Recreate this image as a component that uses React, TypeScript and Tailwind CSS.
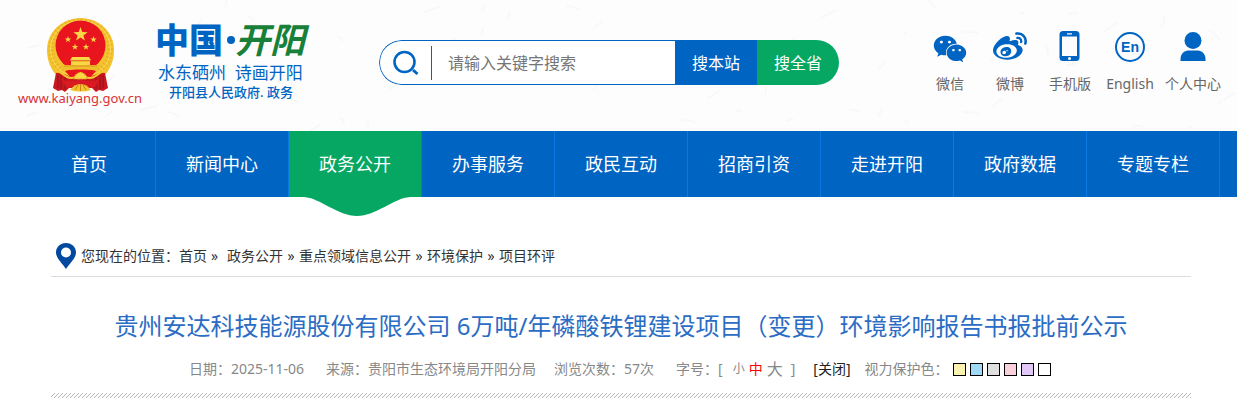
import React from "react";
import { FaWeibo, FaWeixin } from "react-icons/fa";

const navItems = [
  "首页",
  "新闻中心",
  "政务公开",
  "办事服务",
  "政民互动",
  "招商引资",
  "走进开阳",
  "政府数据",
  "专题专栏",
];

const crumbs = ["政务公开", "重点领域信息公开", "环境保护", "项目环评"];

const eyeColors = [
  { name: "黄色", cls: "bg-[#faf3b0]" },
  { name: "蓝色", cls: "bg-[#9fd9f6]" },
  { name: "灰色", cls: "bg-[#dfdfdf]" },
  { name: "粉色", cls: "bg-[#fad0db]" },
  { name: "紫色", cls: "bg-[#e2c8f8]" },
  { name: "白色", cls: "bg-white" },
];

// faint paper fibres behind the header
const fibres = Array.from({ length: 110 }, (_, i) => {
  const x = (i * 397) % 1900;
  const y = (i * 83 + ((i * i) % 37)) % 131;
  const dx = ((i * 29) % 27) - 9;
  const dy = ((i * 17) % 19) - 12;
  return `M${x} ${y}q${dx / 2 + 2} ${dy / 2 - 1} ${dx} ${dy}`;
}).join("");

const star = (cx: number, cy: number, r: number) =>
  Array.from({ length: 10 }, (_, i) => {
    const a = (Math.PI / 5) * i - Math.PI / 2;
    const d = i % 2 ? r * 0.4 : r;
    return `${(cx + d * Math.cos(a)).toFixed(2)},${(cy + d * Math.sin(a)).toFixed(2)}`;
  }).join(" ");

const Emblem = () => (
  <svg className="h-[74px] w-[67px]" viewBox="0 0 67 74" aria-hidden="true">
    <path
      d="M33.5 0C15 0 0 14 0 32c0 11 4 20 11 27l9 5h27l9-5c7-7 11-16 11-27C67 14 52 0 33.5 0Z"
      fill="#f3c22d"
    />
    <ellipse cx="33.5" cy="31" rx="29.5" ry="28" fill="none" stroke="#e3a922" strokeWidth="5" strokeDasharray="1 3" />
    <ellipse cx="33.5" cy="31" rx="30" ry="28.5" fill="none" stroke="#fbdc55" strokeWidth="1" />
    <circle cx="33.5" cy="27.5" r="25" fill="#e8141e" />
    <g fill="#fbd745">
      <polygon points={star(33.5, 16.5, 7.5)} />
      <polygon points={star(21, 21.5, 3.4)} />
      <polygon points={star(46.5, 21.5, 3.4)} />
      <polygon points={star(28, 29, 3.4)} />
      <polygon points={star(39, 29, 3.4)} />
      <path d="M25 39h17l2 3.500H23ZM24 43h19v4H24Z" />
      <path d="M14 47h39l-3 6H17Z" fill="#f0bd2c" />
    </g>
    <path d="M24 43h19M17 48h33" stroke="#c9871a" strokeWidth=".7" />
    <path d="M9 55c6-1 9 2 15 4l9.500 3 9.500-3c6-2 9-5 15-4l3 15-5 3-4-1-3 2-4-4H22l-4 4-3-2-4 1-5-3Z" fill="#c91720" />
    <path d="M11 57v13M14 57v14M18 58v13M49 58v13M53 57v14M56 57v13" stroke="#8f1018" strokeWidth=".9" />
    <path d="M18 53c5-2 26-2 31 0l-7 8H25Z" fill="#e8141e" />
    <path d="M9 53c6 0 8 7 15 7s9-5 9.500-5S36 60 43 60s9-7 15-7" fill="none" stroke="#f5c831" strokeWidth="2" />
    <path d="M27 61a6.500 6.500 0 0 1 13 0Z" fill="#fbd745" stroke="#d99a1c" strokeWidth="1" strokeDasharray="2 1.500" />
    <path d="M14 61c8 3 13 3 19.500 0 6.500 3 11.500 3 19.500 0l-5 8c-5 1-10 0-14.500-3-4.500 3-9.500 4-14.500 3Z" fill="#d91a22" />
    <path d="M23 72c3-4 6-6 10.500-6S41 68 44 72c-7 2-14 2-21 0Z" fill="#f3c22d" />
    <path d="m28 72 3-5m2.500 6v-7m5.500 6-3-5" stroke="#c9871a" strokeWidth="1" />
  </svg>
);

const PhoneIcon = () => (
  <svg className="h-[31px] w-[22px]" viewBox="0 0 22 31" aria-hidden="true">
    <path
      fillRule="evenodd"
      fill="#0064c3"
      d="M4 0h13a3.500 3.500 0 0 1 3.500 3.500v23A3.500 3.500 0 0 1 17 30H4a3.500 3.500 0 0 1-3.500-3.500v-23A3.500 3.500 0 0 1 4 0ZM3 5.500V25h15V5.500ZM8 2.200v1.300h5V2.200ZM10.500 26a1.500 1.500 0 1 0 0 3 1.500 1.500 0 0 0 0-3Z"
    />
  </svg>
);

const UserIcon = () => (
  <svg className="h-[30px] w-[26px]" viewBox="0 0 26 30" fill="#0064c3" aria-hidden="true">
    <circle cx="13" cy="8.500" r="8.500" />
    <path d="M.5 29v-2C.5 21 5 18.500 9 18.500h8c4 0 8.500 2.500 8.500 8.500v2Z" />
  </svg>
);

const links = [
  { label: "微信", width: "w-[60px]", icon: <FaWeixin className="mt-1 size-[34px]" /> },
  { label: "微博", width: "w-[60px]", icon: <FaWeibo className="size-[34px]" /> },
  { label: "手机版", width: "w-[60px]", icon: <PhoneIcon /> },
  {
    label: "English",
    width: "w-[60px]",
    icon: (
      <span className="flex size-[30px] items-center justify-center rounded-full border-2 border-[#0064c3] font-['Liberation_Sans',sans-serif] text-sm font-bold">
        En
      </span>
    ),
  },
  { label: "个人中心", width: "w-[66px]", icon: <UserIcon /> },
];

const Header = () => (
  <header className="relative h-[131px] bg-[#fdfdfd]">
    <svg className="absolute inset-0 h-full w-full" aria-hidden="true">
      <path d={fibres} fill="none" stroke="#f8f8f8" strokeWidth="2" strokeLinecap="round" />
    </svg>

    <div className="relative flex items-start pr-[11px] pl-[18px]">
      <a href="#" className="flex w-[124px] shrink-0 flex-col items-center pt-[18px] text-[#d93236]">
        <Emblem />
        <span className="text-[13px] leading-3">www.kaiyang.gov.cn</span>
      </a>

      <div className="ml-[13px] w-[154px] shrink-0 pt-[17px] text-[#0064c3]">
        <h1 className="flex items-center leading-[46px] whitespace-nowrap">
          <span className="text-[34px] font-black">中国</span>
          <span className="ml-1 size-2 rounded-full bg-current" />
          <span className="text-[35px] font-bold text-[#188038] italic">开阳</span>
        </h1>
        <p className="pl-[3px] text-[17px] leading-5 whitespace-nowrap">水东硒州&nbsp; 诗画开阳</p>
        <p className="pl-[14px] text-[13px] leading-[18px] font-medium whitespace-nowrap">开阳县人民政府. 政务</p>
      </div>

      <form
        className="mt-10 ml-[70px] flex h-[45px] max-w-[460px] grow overflow-hidden rounded-full"
        onSubmit={(e) => e.preventDefault()}
      >
        <div className="flex min-w-0 grow items-center rounded-l-full border border-r-0 border-[#0064c3] bg-white pl-[13px]">
          <svg className="size-[26px] shrink-0" viewBox="0 0 26 26" fill="none" stroke="#0064c3" aria-hidden="true">
            <circle cx="11.500" cy="12" r="10" strokeWidth="2.600" />
            <path d="m20 20 4.500 4" strokeWidth="3" />
          </svg>
          <span className="ml-3 h-[34px] w-px shrink-0 bg-[#0064c3]" />
          <input
            type="text"
            aria-label="请输入关键字搜索"
            placeholder="请输入关键字搜索"
            className="min-w-0 grow px-4 text-base outline-none placeholder:text-[#757575]"
          />
        </div>
        <button type="submit" className="w-[82px] shrink-0 bg-[#0064c3] text-base text-white">
          搜本站
        </button>
        <button type="button" className="w-[82px] shrink-0 bg-[#05a763] text-base text-white">
          搜全省
        </button>
      </form>

      <ul className="ml-auto flex shrink-0 pt-[31px] text-sm text-[#666]">
        {links.map((link) => (
          <li key={link.label} className={link.width}>
            <a href="#" className="flex flex-col items-center whitespace-nowrap">
              <span className="flex h-[31px] items-center text-[#0064c3]">{link.icon}</span>
              <span className="mt-3 leading-5">{link.label}</span>
            </a>
          </li>
        ))}
      </ul>
    </div>
  </header>
);

const Nav = () => (
  <nav className="bg-[#0064c3] pr-[17px] pl-[23px]">
    <ul className="flex text-lg text-white">
      {navItems.map((item) => (
        <li key={item} className="relative flex-1 border-r border-[#0c78e3]">
          <a
            href="#"
            className={`flex h-[66px] items-center justify-center whitespace-nowrap ${
              item === "政务公开" ? "bg-[#05a763]" : ""
            }`}
          >
            {item}
          </a>
          {item === "政务公开" && (
            <svg
              className="absolute top-full left-0 h-[19px] w-full"
              viewBox="0 0 132 19"
              fill="#05a763"
              aria-hidden="true"
            >
              <path d="M15 0c16 1 34 19 53 19s37-18 53-19Z" />
            </svg>
          )}
        </li>
      ))}
    </ul>
  </nav>
);

const Breadcrumb = () => (
  <div className="flex h-10 items-center border-b border-[#ddd] pb-0.5 pl-[5px] text-sm text-[#333]">
    <svg className="h-[26px] w-5 shrink-0" viewBox="0 0 20 26" aria-hidden="true">
      <path
        fillRule="evenodd"
        fill="#00499f"
        d="M10 0C4 0 0 4.300 0 9.500 0 15 6 20 10 26c4-6 10-11 10-16.500C20 4.300 16 0 10 0Zm0 4.500a5 5 0 1 1 0 10 5 5 0 0 1 0-10Z"
      />
    </svg>
    <div className="ml-[5px] flex whitespace-nowrap">
      <span>您现在的位置：</span>
      <a href="#">首页</a>
      {crumbs.map((crumb, i) => (
        <React.Fragment key={crumb}>
          <span className={i === 0 ? "w-5 pl-1" : "w-4 text-center"}>»</span>
          <a href="#">{crumb}</a>
        </React.Fragment>
      ))}
    </div>
  </div>
);

const ArticleMeta = () => (
  <div className="mt-[17px] flex items-center pl-[138px] text-sm leading-5 whitespace-nowrap text-[#888]">
    <span>日期：2025-11-06</span>
    <span className="ml-[22px]">来源：贵阳市生态环境局开阳分局</span>
    <span className="ml-[18px]">浏览次数：57次</span>
    <span className="ml-[22px] flex items-center">
      字号：[
      <button type="button" className="ml-[10px] text-xs">
        小
      </button>
      <button type="button" className="ml-1 text-sm text-[#f00]">
        中
      </button>
      <button type="button" className="mr-2 ml-1 text-base leading-5">
        大
      </button>
      ]
    </span>
    <a href="#" className="ml-[18px] text-[#222]">
      [关闭]
    </a>
    <span className="ml-[14px]">视力保护色：</span>
    <span className="ml-1 flex gap-1">
      {eyeColors.map((c) => (
        <button key={c.name} type="button" aria-label={c.name} className={`size-[13px] border border-black ${c.cls}`} />
      ))}
    </span>
  </div>
);

const App = () => {
  return (
    <div className="bg-white font-['Noto_Sans','Noto_Sans_CJK_SC',sans-serif]">
      <Header />
      <Nav />
      <main className="pt-10 pr-[46px] pb-2 pl-[51px]">
        <Breadcrumb />
        <h2 className="mt-[33px] text-center text-2xl text-[#2b6cc4]">
          贵州安达科技能源股份有限公司 6万吨/年磷酸铁锂建设项目（变更）环境影响报告书报批前公示
        </h2>
        <ArticleMeta />
        <div className="mt-[14px] h-[5px] bg-[linear-gradient(135deg,transparent_38%,#b5b5b5_38%,#b5b5b5_62%,transparent_62%)] bg-[length:4px_4px]" />
      </main>
    </div>
  );
};

export default App;
